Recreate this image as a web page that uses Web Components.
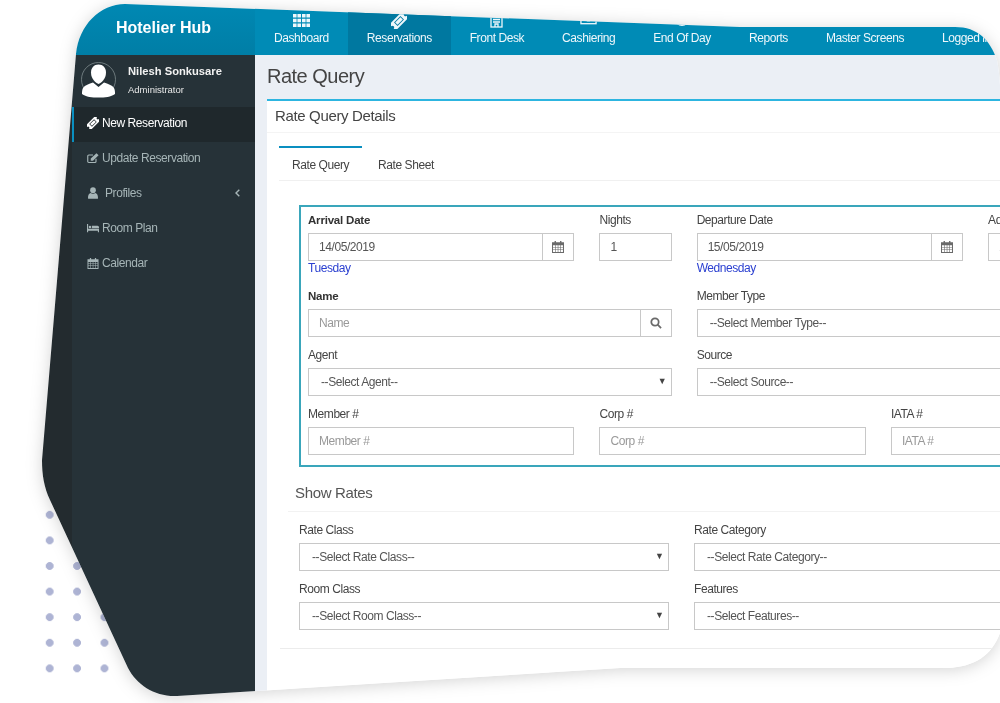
<!DOCTYPE html>
<html>
<head>
<meta charset="utf-8">
<title>Rate Query</title>
<style>
  body { margin: 0; background: #fff; overflow: hidden; font-family: "Liberation Sans", Arial, sans-serif; }
</style>
</head>
<body>
<hh-stage>
  <hh-topbar slot="top">
    <hh-nav-item icon="th" label="Dashboard"></hh-nav-item>
    <hh-nav-item icon="ticket" label="Reservations" active></hh-nav-item>
    <hh-nav-item icon="building" label="Front Desk"></hh-nav-item>
    <hh-nav-item icon="money" label="Cashiering"></hh-nav-item>
    <hh-nav-item icon="clock" label="End Of Day"></hh-nav-item>
    <hh-nav-item icon="bars" label="Reports"></hh-nav-item>
    <hh-nav-item icon="none" label="Master Screens"></hh-nav-item>
    <hh-nav-item icon="none" label="Logged in"></hh-nav-item>
  </hh-topbar>
  <hh-sidebar slot="side">
    <hh-side-item icon="ticket" active>New Reservation</hh-side-item>
    <hh-side-item icon="edit">Update Reservation</hh-side-item>
    <hh-side-item icon="user" wide more>Profiles</hh-side-item>
    <hh-side-item icon="bed">Room Plan</hh-side-item>
    <hh-side-item icon="calendar">Calendar</hh-side-item>
  </hh-sidebar>
  <hh-rate-query slot="main"></hh-rate-query>
</hh-stage>

<script>
const icons = {
  none: '',
  th: '<svg viewBox="0 0 17 13" width="17" height="13" fill="currentColor"><path d="M0 0h3.600v3.600H0zM4.400 0H8v3.600H4.400zM9 0h3.600v3.600H9zM13.400 0H17v3.600h-3.600zM0 4.700h3.600v3.600H0zM4.400 4.700H8v3.600H4.400zM9 4.700h3.600v3.600H9zM13.400 4.700H17v3.600h-3.600zM0 9.400h3.600V13H0zM4.400 9.400H8V13H4.400zM9 9.400h3.600V13H9zM13.400 9.400H17V13h-3.600z"/></svg>',
  ticket: '<svg viewBox="0 0 16 16" width="100%" height="100%" fill="currentColor"><g transform="rotate(-45 8 8)"><path fill-rule="evenodd" d="M-1 3.500h18v3a1.500 1.500 0 0 0 0 3v3H-1v-3a1.500 1.500 0 0 0 0-3zM3.500 5.500v5h9v-5zM4.300 6.300h7.400v3.400H4.300z"/></g></svg>',
  building: '<svg viewBox="0 0 13 15" width="13" height="15" fill="none" stroke="currentColor" stroke-width="1.300"><rect x="1" y="1" width="11" height="13"/><path d="M3 4h7M3 6.500h7M3 9h7M5 14v-3h3v3"/></svg>',
  money: '<svg viewBox="0 0 18 13" width="18" height="13" fill="none" stroke="currentColor" stroke-width="1.400" style="margin-top:-3px"><rect x="1" y="1" width="16" height="11"/><circle cx="9" cy="6.500" r="2.600"/></svg>',
  clock: '<svg viewBox="0 0 14 14" width="14" height="14" fill="currentColor" style="margin-top:-3px"><circle cx="7" cy="7" r="7"/></svg>',
  bars: '<svg viewBox="0 0 15 14" width="15" height="14" fill="currentColor"><rect width="15" height="14" rx="1"/></svg>',
  calendar: '<svg viewBox="0 0 14 14" width="100%" height="100%" fill="currentColor"><path fill-rule="evenodd" d="M3 0h1.600v1.600h4.800V0H11v1.600h3V14H0V1.600h3zM1.200 5v1.900h2.400V5zm3.100 0v1.900h2.400V5zm3.100 0v1.900h2.400V5zm3.100 0v1.900h2.300V5zM1.200 7.600v1.900h2.400V7.600zm3.100 0v1.900h2.400V7.600zm3.100 0v1.900h2.400V7.600zm3.100 0v1.900h2.300V7.600zM1.200 10.200v2.600h2.400v-2.600zm3.100 0v2.600h2.400v-2.600zm3.100 0v2.600h2.400v-2.600zm3.100 0v2.600h2.300v-2.600z"/></svg>',
  edit: '<svg viewBox="0 0 16 14" width="100%" height="100%" fill="none" stroke="currentColor" stroke-width="1.500"><path d="M12 8v3.600a1.400 1.400 0 0 1-1.400 1.400H2.400A1.400 1.400 0 0 1 1 11.600V4.400A1.400 1.400 0 0 1 2.400 3H8"/><path fill="currentColor" stroke="none" d="M5 7.600 12.600.6 15.400 3.400 8 10.600H5z"/></svg>',
  user: '<svg viewBox="0 0 12 14" width="100%" height="100%" fill="currentColor"><circle cx="6" cy="3.600" r="3.400"/><path d="M.5 14C0 14 0 13.500 0 13c0-3 .8-5.400 3-6 1.800 1.300 4.200 1.300 6 0 2.200.6 3 3 3 6 0 .5 0 1-.5 1z"/></svg>',
  bed: '<svg viewBox="0 0 16 11" width="100%" height="100%" fill="currentColor"><path d="M0 0h1.500v6.500H16V11h-1.500V9H1.500v2H0z"/><circle cx="4" cy="4.200" r="1.700"/><path d="M6.500 2.500H14a2 2 0 0 1 2 2v1.300H6.500z"/></svg>',
  search: '<svg viewBox="0 0 13 13" width="12" height="12" fill="none" stroke="currentColor" stroke-width="1.900"><circle cx="5.400" cy="5.400" r="4"/><path d="M8.300 8.300 12 12"/></svg>'
};

const stageTemplate = document.createElement('template');
stageTemplate.innerHTML = `
  <style>
    :host { display: block; position: relative; width: 1000px; height: 703px; overflow: hidden; }
    .dots {
      position: absolute; left: 36px; top: 502px; width: 81px; height: 180px;
      background-image: radial-gradient(circle at center, #aeb4d4 3.600px, transparent 4.200px);
      background-size: 27.400px 25.600px;
    }
    .shadow { position: absolute; inset: 0; filter: blur(.4px) drop-shadow(0 2px 8px rgba(0, 0, 0, .17)); }
    .window {
      width: 1000px; height: 703px;
      display: grid; grid-template-columns: 255px 745px; grid-template-rows: 55px 648px;
      background: #fff;
      clip-path: path("M76 54 C79 25 100 4 125 4 L740 27 L955 27 C978 27 990 40 997 60 Q999 70 1000 85 L1000 633 C992 655 975 667 947 668 L620 668 L177 696 C155 697 137 685 128 668 L50 500 C44 487 42 475 42 460 Z");
    }
    .brand {
      display: flex; align-items: center; justify-content: center;
      padding: 1px 0 0 72px; box-sizing: border-box;
      background: linear-gradient(#0089b4, #007ea6);
      color: #fff; font-size: 16px; font-weight: bold;
    }
    .side { background: linear-gradient(90deg, #232b2f 72px, #263238 72px); min-width: 0; }
    .main { min-width: 0; overflow: hidden; background: #ebeff5; }
    .top { min-width: 0; overflow: hidden; }
  </style>
  <div class="dots"></div>
  <div class="shadow">
    <div class="window">
      <div class="brand">Hotelier Hub</div>
      <div class="top"><slot name="top"></slot></div>
      <div class="side"><slot name="side"></slot></div>
      <div class="main"><slot name="main"></slot></div>
    </div>
  </div>
`;
customElements.define('hh-stage', class extends HTMLElement {
  constructor() {
    super();
    this.attachShadow({ mode: 'open' }).appendChild(stageTemplate.content.cloneNode(true));
  }
});

const topbarTemplate = document.createElement('template');
topbarTemplate.innerHTML = `
  <style>
    :host { display: flex; height: 55px; width: 800px; background: #008bb6; }
  </style>
  <slot></slot>
`;
customElements.define('hh-topbar', class extends HTMLElement {
  constructor() {
    super();
    this.attachShadow({ mode: 'open' }).appendChild(topbarTemplate.content.cloneNode(true));
  }
});

customElements.define('hh-nav-item', class extends HTMLElement {
  constructor() {
    super();
    const name = this.getAttribute('icon');
    this.attachShadow({ mode: 'open' }).innerHTML = `
      <style>
        :host {
          display: flex; flex-direction: column; align-items: center; flex: none;
          box-sizing: border-box; height: 55px; padding: 13px 19px 0;
          color: #eef7fb; font-size: 12px; letter-spacing: -.43px; white-space: nowrap;
        }
        :host([active]) { background: #0078a0; }
        .icon { height: 14px; width: 17px; display: flex; align-items: center; justify-content: center; }
        :host([icon="ticket"]) .icon svg { flex: none; width: 16px; height: 16px; margin-top: 1px; }
        .label { margin-top: 4px; line-height: 14px; }
      </style>
      <div class="icon">${icons[name]}</div>
      <div class="label">${this.getAttribute('label')}</div>
    `;
  }
});

const sidebarTemplate = document.createElement('template');
sidebarTemplate.innerHTML = `
  <style>
    :host { display: block; padding-left: 72px; color: #a6b5b7; font-size: 12px; letter-spacing: -.43px; }
    .user { display: flex; height: 52px; box-sizing: border-box; padding: 7px 0 0 9px; gap: 12px; letter-spacing: 0; }
    .name { color: #f2f2f2; font-weight: bold; font-size: 11.200px; line-height: 14px; margin-top: 2px; }
    .role { color: #e8e8e8; font-size: 9.500px; line-height: 12px; margin-top: 6px; }
  </style>
  <div class="user">
    <svg width="35" height="36" viewBox="0 0 35 36">
      <circle cx="17.500" cy="17.500" r="17" fill="none" stroke="#7f8b8e" stroke-width=".8"/>
      <path fill="#fff" d="M17.500 2.500c4.500 0 7.500 3.500 7.500 8 0 4-2 9-7.500 11.500C12 19.500 10 14.500 10 10.500c0-4.500 3-8 7.500-8z"/>
      <path fill="#fff" d="M12 20.500 17.500 25 23 20.500c4 1.500 8 2.500 10 5.500 1 2 1 4 1 6-4 3-10 3.500-16.500 3.500S5 35 1 32c0-2 0-4 1-6 2-3 6-4 10-5.500z"/>
    </svg>
    <div>
      <div class="name">Nilesh Sonkusare</div>
      <div class="role">Administrator</div>
    </div>
  </div>
  <slot></slot>
`;
customElements.define('hh-sidebar', class extends HTMLElement {
  constructor() {
    super();
    this.attachShadow({ mode: 'open' }).appendChild(sidebarTemplate.content.cloneNode(true));
  }
});

customElements.define('hh-side-item', class extends HTMLElement {
  constructor() {
    super();
    const name = this.getAttribute('icon');
    const more = this.hasAttribute('more')
      ? '<svg class="more" width="5" height="8" viewBox="0 0 5 8" fill="none" stroke="currentColor" stroke-width="1.400"><path d="M4.300.7 1 4l3.300 3.300"/></svg>'
      : '';
    this.attachShadow({ mode: 'open' }).innerHTML = `
      <style>
        :host {
          display: flex; align-items: center; height: 35px; box-sizing: border-box;
          padding: 0 15px 3px; border-left: 0 solid #0a8fc0;
        }
        :host([active]) { background: #1f282c; color: #fff; border-left-width: 2px; padding-left: 13px; }
        .icon { width: 12px; height: 12px; margin-right: 3px; display: flex; align-items: center; justify-content: center; flex: none; }
        :host([wide]) .icon { margin-right: 6px; }
        :host([icon="user"]) .icon svg { width: 10px; }
        :host([icon="bed"]) .icon svg { height: 10px; }
        :host([icon="calendar"]) .icon svg { height: 11px; }
        .more { margin-left: auto; }
      </style>
      <div class="icon">${icons[name]}</div>
      <slot></slot>
      ${more}
    `;
  }
});

customElements.define('hh-field', class extends HTMLElement {
  constructor() {
    super();
    const a = n => this.getAttribute(n);
    const addon = a('addon');
    const text = a('placeholder') || a('value') || '';
    this.attachShadow({ mode: 'open' }).innerHTML = `
      <style>
        :host { display: block; min-width: 0; grid-column: span var(--span, 1); font-size: 12px; letter-spacing: -.43px; color: #444; }
        .label { line-height: 14px; margin-bottom: 6px; white-space: nowrap; }
        :host([strong]) .label { color: #333; font-weight: bold; font-size: 11.500px; letter-spacing: -.2px; }
        .control {
          display: flex; align-items: center; height: 28px; box-sizing: border-box;
          border: 1px solid #c8c8c8; background: #fff; color: #555;
        }
        .text { flex: 1; padding-left: 10px; white-space: nowrap; overflow: hidden; }
        :host([kind="select"]) .text { padding-left: 12px; }
        .ph { color: #999; }
        .addon {
          width: 30px; align-self: stretch; border-left: 1px solid #c8c8c8; flex: none;
          display: flex; align-items: center; justify-content: center; color: #6a6a6a;
        }
        .addon.cal svg { width: 12px; height: 12px; }
        .arrow { font-size: 9px; color: #444; margin: -2px 4px 0 0; line-height: 1; letter-spacing: 0; }
        .day { color: #2a3fd0; line-height: 14px; margin-bottom: 3px; }
      </style>
      <div class="label">${a('label')}</div>
      <div class="control">
        <div class="text ${a('placeholder') ? 'ph' : ''}">${text}</div>
        ${addon ? `<div class="addon ${addon === 'calendar' ? 'cal' : ''}">${icons[addon]}</div>` : ''}
        ${a('kind') === 'select' ? '<span class="arrow">&#9660;</span>' : ''}
      </div>
      ${a('day') ? `<div class="day">${a('day')}</div>` : ''}
    `;
  }
});

const tabsTemplate = document.createElement('template');
tabsTemplate.innerHTML = `
  <style>
    :host { display: flex; height: 35px; box-sizing: border-box; margin: 13px 0 0 12px; border-bottom: 1px solid #f0f0f0; font-size: 12px; letter-spacing: -.43px; color: #444; }
    div { box-sizing: border-box; height: 34px; padding: 10px 13px 0; line-height: 14px; white-space: nowrap; margin-right: 3px; border-top: 2px solid transparent; }
    .on { border-top-color: #0a8fc0; background: #fff; }
  </style>
  <div class="on">Rate Query</div>
  <div>Rate Sheet</div>
`;
customElements.define('hh-tabs', class extends HTMLElement {
  constructor() {
    super();
    this.attachShadow({ mode: 'open' }).appendChild(tabsTemplate.content.cloneNode(true));
  }
});

const rateTemplate = document.createElement('template');
rateTemplate.innerHTML = `
  <style>
    :host { display: block; height: 100%; padding-left: 12px; color: #444; }
    h1 { margin: 0; font-size: 20px; letter-spacing: -.5px; font-weight: normal; height: 44px; line-height: 42px; color: #444; }
    .panel { background: #fff; border-top: 2px solid #2db5e0; height: 604px; width: 733px; overflow: hidden; }
    .head { font-size: 15px; letter-spacing: -.35px; line-height: 29px; height: 31px; padding-left: 8px; border-bottom: 1px solid #f4f4f4; }
    .box {
      margin: 24px 0 0 32px; width: 800px; box-sizing: border-box;
      border: 2px solid #3aa6bb; border-right: 0; padding: 6px 0 10px 7px;
      display: grid; grid-template-columns: repeat(12, 72.170px); column-gap: 25px; row-gap: 11px;
    }
    .sub {
      margin: 16px 0 0 21px; padding: 0 0 8px 7px; border-bottom: 1px solid #f2f2f2;
      font-size: 15px; letter-spacing: -.35px; line-height: 20px; color: #555;
    }
    .rates {
      margin: 11px 0 0 32px; width: 800px;
      display: grid; grid-template-columns: 370px 370px; column-gap: 25px; row-gap: 11px;
    }
    .end { margin: 18px 0 0 13px; border-bottom: 1px solid #ececec; }
  </style>
  <h1>Rate Query</h1>
  <div class="panel">
    <div class="head">Rate Query Details</div>
    <hh-tabs></hh-tabs>
    <div class="box">
      <hh-field style="--span:3" strong label="Arrival Date" value="14/05/2019" addon="calendar" day="Tuesday"></hh-field>
      <hh-field label="Nights" value="1"></hh-field>
      <hh-field style="--span:3" label="Departure Date" value="15/05/2019" addon="calendar" day="Wednesday"></hh-field>
      <hh-field style="--span:5" label="Adults" value="1"></hh-field>
      <hh-field style="--span:4" strong label="Name" placeholder="Name" addon="search"></hh-field>
      <hh-field style="--span:8" kind="select" label="Member Type" value="--Select Member Type--"></hh-field>
      <hh-field style="--span:4" kind="select" label="Agent" value="--Select Agent--"></hh-field>
      <hh-field style="--span:8" kind="select" label="Source" value="--Select Source--"></hh-field>
      <hh-field style="--span:3" label="Member #" placeholder="Member #"></hh-field>
      <hh-field style="--span:3" label="Corp #" placeholder="Corp #"></hh-field>
      <hh-field style="--span:3" label="IATA #" placeholder="IATA #"></hh-field>
    </div>
    <div class="sub">Show Rates</div>
    <div class="rates">
      <hh-field kind="select" label="Rate Class" value="--Select Rate Class--"></hh-field>
      <hh-field kind="select" label="Rate Category" value="--Select Rate Category--"></hh-field>
      <hh-field kind="select" label="Room Class" value="--Select Room Class--"></hh-field>
      <hh-field kind="select" label="Features" value="--Select Features--"></hh-field>
    </div>
    <div class="end"></div>
  </div>
`;
customElements.define('hh-rate-query', class extends HTMLElement {
  constructor() {
    super();
    this.attachShadow({ mode: 'open' }).appendChild(rateTemplate.content.cloneNode(true));
  }
});
</script>
</body>
</html>
